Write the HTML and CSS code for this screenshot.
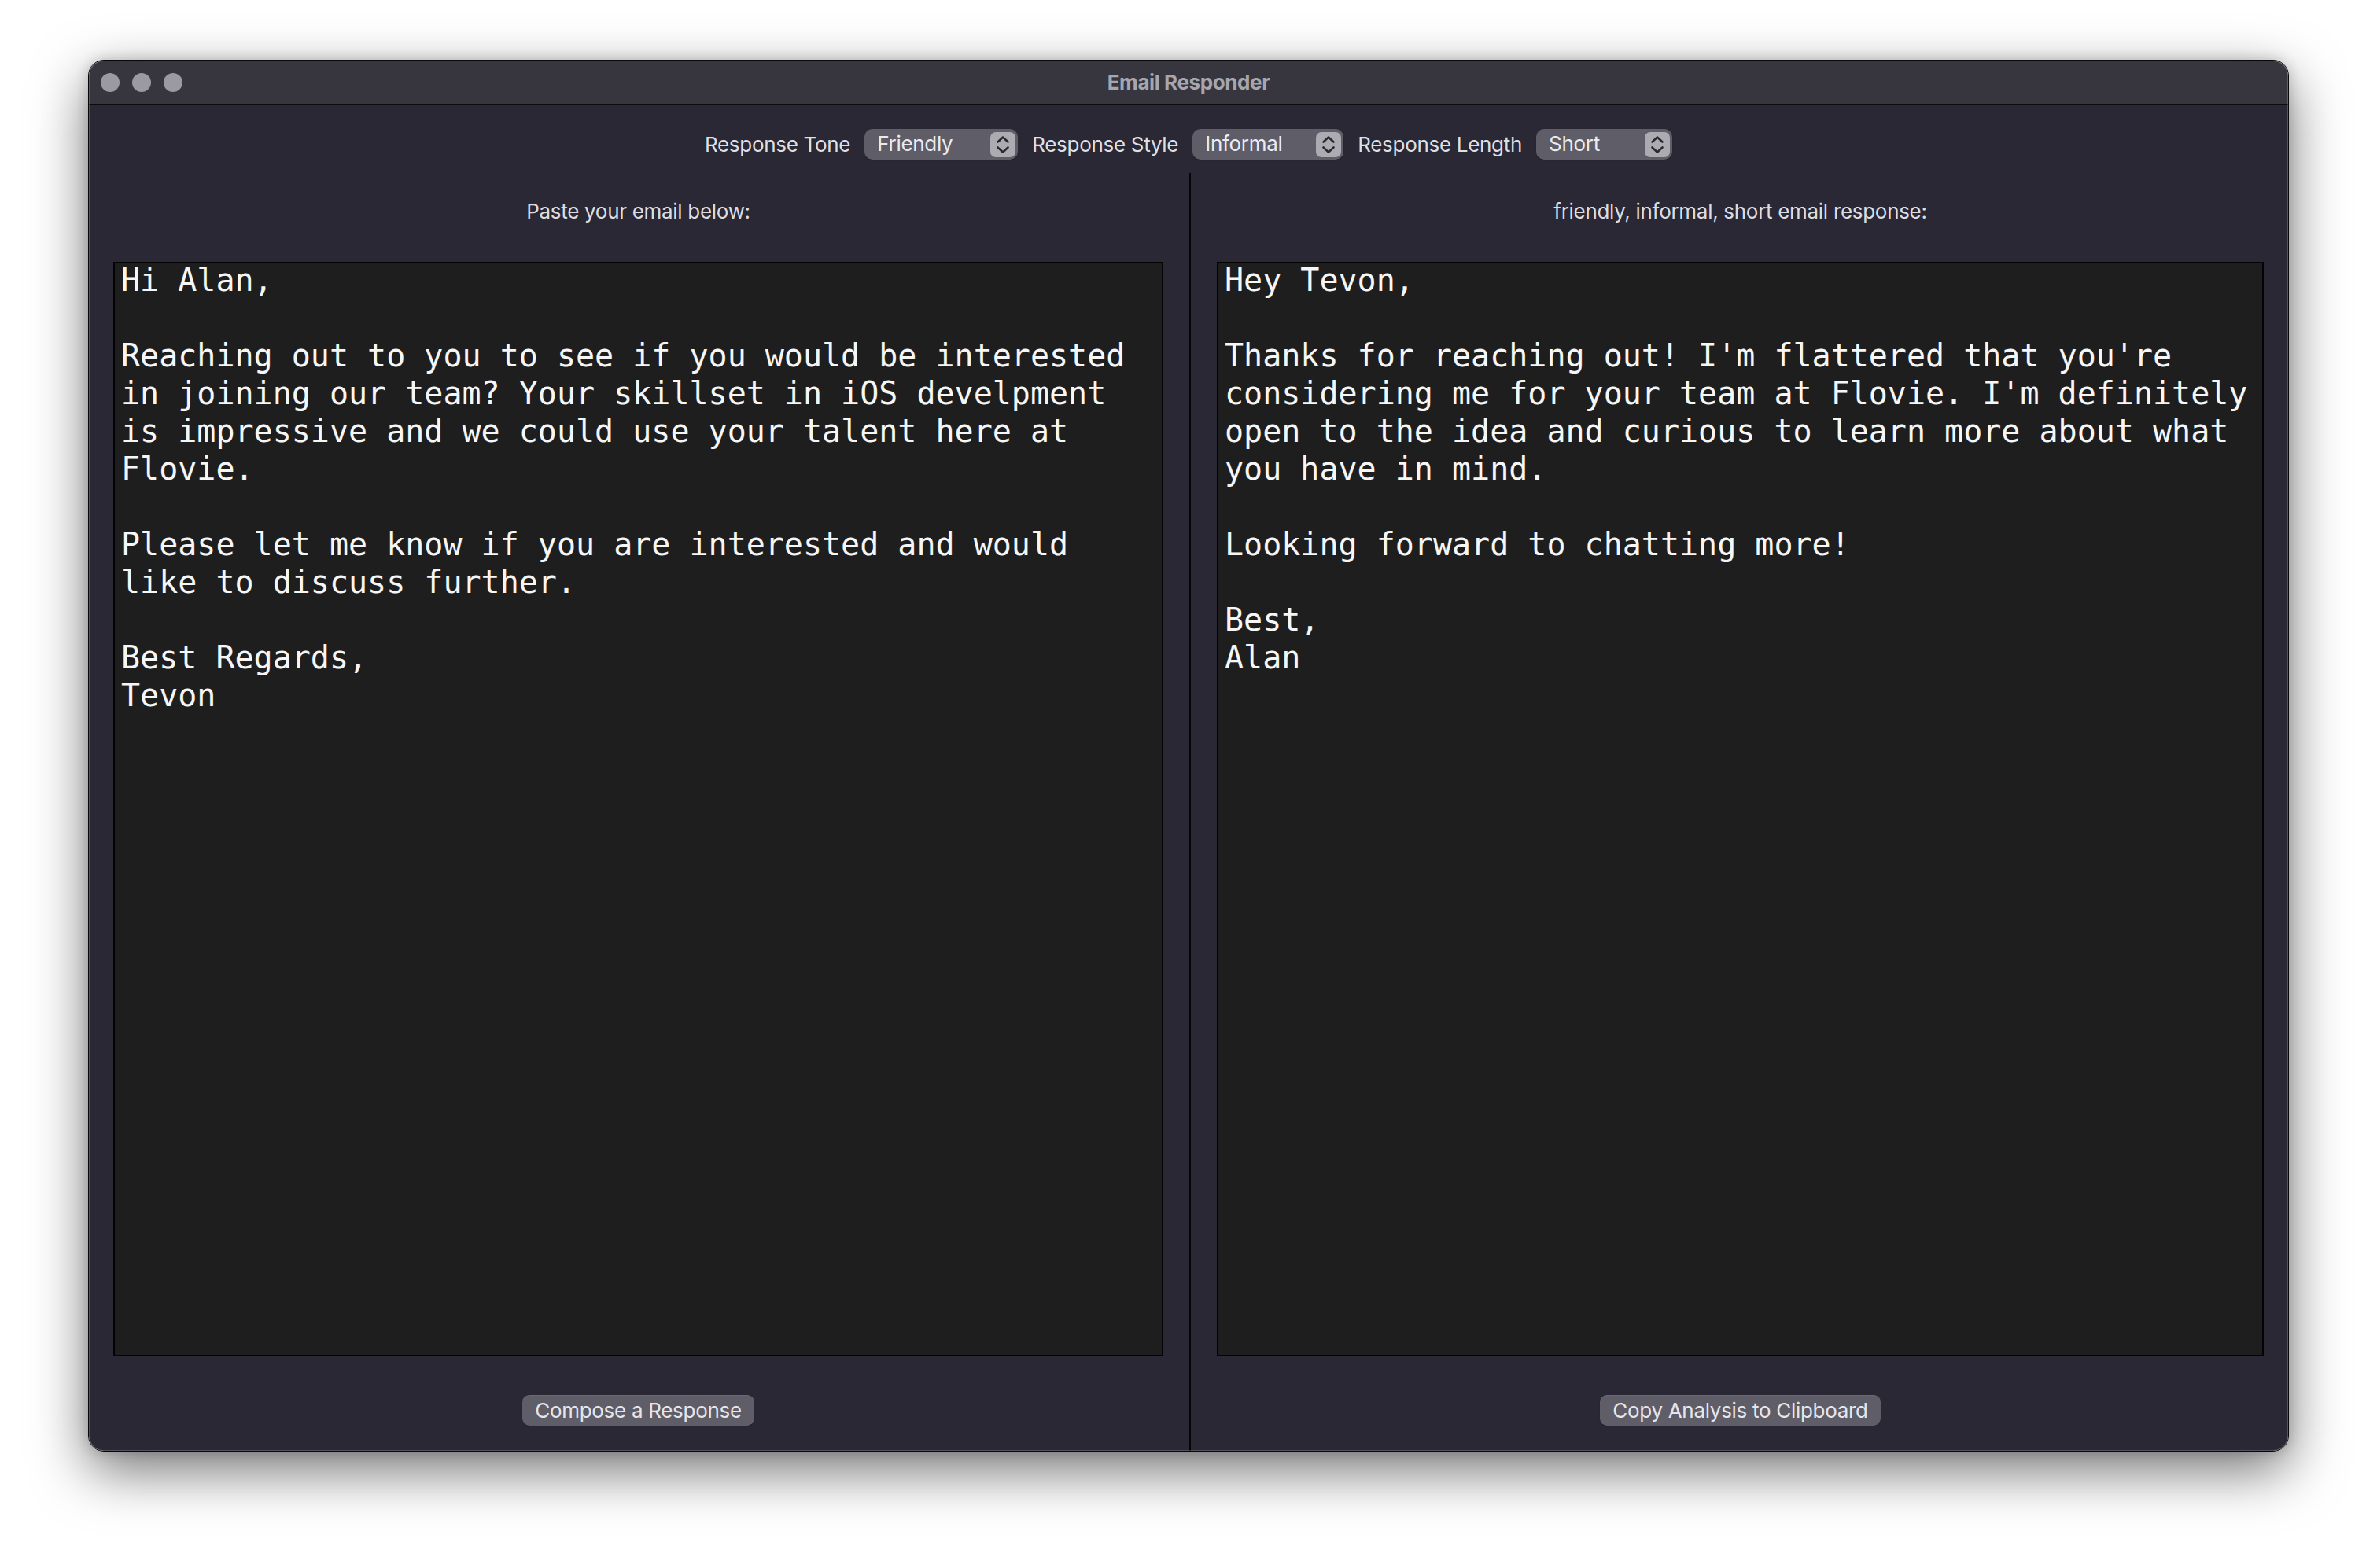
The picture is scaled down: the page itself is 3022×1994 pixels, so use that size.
FILE: index.html
```html
<!DOCTYPE html>
<html lang="en">
<head>
<meta charset="utf-8">
<title>Email Responder</title>
<link rel="stylesheet" href="styles.css">
</head>
<body>
<div class="desktop">
  <div class="window">
    <div class="titlebar">
      <div class="lights">
        <span class="light"></span>
        <span class="light"></span>
        <span class="light"></span>
      </div>
      <div class="title">Email Responder</div>
      <div class="titlebar-spacer"></div>
    </div>
    <div class="content">
      <div class="toolbar">
        <span class="label">Response Tone</span>
        <div class="popup popup-tone">
          <span class="popup-text">Friendly</span>
          <span class="stepper"><svg viewBox="0 0 32 32" width="32" height="32"><path d="M9.5 12.5 L16 6.5 L22.5 12.5" /><path d="M9.5 19.5 L16 25.5 L22.5 19.5" /></svg></span>
        </div>
        <span class="label">Response Style</span>
        <div class="popup popup-style">
          <span class="popup-text">Informal</span>
          <span class="stepper"><svg viewBox="0 0 32 32" width="32" height="32"><path d="M9.5 12.5 L16 6.5 L22.5 12.5" /><path d="M9.5 19.5 L16 25.5 L22.5 19.5" /></svg></span>
        </div>
        <span class="label">Response Length</span>
        <div class="popup popup-length">
          <span class="popup-text">Short</span>
          <span class="stepper"><svg viewBox="0 0 32 32" width="32" height="32"><path d="M9.5 12.5 L16 6.5 L22.5 12.5" /><path d="M9.5 19.5 L16 25.5 L22.5 19.5" /></svg></span>
        </div>
      </div>
      <div class="panes">
        <div class="pane pane-left">
          <div class="pane-header">Paste your email below:</div>
          <div class="editor"><div class="editor-text">Hi Alan,

Reaching out to you to see if you would be interested
in joining our team? Your skillset in iOS develpment
is impressive and we could use your talent here at
Flovie.

Please let me know if you are interested and would
like to discuss further.

Best Regards,
Tevon</div></div>
          <div class="pane-footer"><button class="btn">Compose a Response</button></div>
        </div>
        <div class="divider"></div>
        <div class="pane pane-right">
          <div class="pane-header">friendly, informal, short email response:</div>
          <div class="editor"><div class="editor-text">Hey Tevon,

Thanks for reaching out! I'm flattered that you're
considering me for your team at Flovie. I'm definitely
open to the idea and curious to learn more about what
you have in mind.

Looking forward to chatting more!

Best,
Alan</div></div>
          <div class="pane-footer"><button class="btn">Copy Analysis to Clipboard</button></div>
        </div>
      </div>
    </div>
  </div>
</div>
</body>
</html>
```

FILE: styles.css
```css
* {
  box-sizing: border-box;
}

html, body {
  margin: 0;
  padding: 0;
  background: #ffffff;
}

body {
  font-family: "Inter", "Noto Sans", "Liberation Sans", sans-serif;
  letter-spacing: -0.3px;
  width: 3022px;
  height: 1994px;
  overflow: hidden;
}

.desktop {
  padding: 76px 0 0 112px;
}

.window {
  position: relative;
  width: 2798px;
  height: 1770px;
  border: 1px solid #08080a;
  border-radius: 20px;
  overflow: hidden;
  display: flex;
  flex-direction: column;
  box-shadow: 0 24px 70px rgba(0, 0, 0, 0.55), 0 0 16px rgba(0, 0, 0, 0.18);
}

.window::after {
  content: "";
  position: absolute;
  inset: 0;
  border-radius: 19px;
  box-shadow: inset 0 0 0 1px rgba(255, 255, 255, 0.2);
  pointer-events: none;
}

.titlebar {
  height: 56px;
  flex: none;
  background: #37363f;
  border-bottom: 1px solid #0c0c0f;
  display: grid;
  grid-template-columns: 1fr auto 1fr;
  align-items: center;
}

.lights {
  display: flex;
  gap: 16px;
  padding-left: 15px;
  padding-top: 1px;
}

.light {
  width: 24px;
  height: 24px;
  border-radius: 50%;
  background: #9b9aa3;
}

.title {
  font-size: 26px;
  font-weight: 700;
  color: #a7a6ae;
  letter-spacing: -0.4px;
}

.content {
  flex: 1;
  background: #292834;
  display: flex;
  flex-direction: column;
}

.toolbar {
  height: 87px;
  flex: none;
  display: flex;
  justify-content: center;
  align-items: flex-start;
  padding-top: 31px;
  gap: 18px;
}

.label {
  font-size: 26px;
  line-height: 39px;
  color: #dfdfe3;
}

.popup {
  height: 39px;
  border-radius: 10px;
  background: #5e5d68;
  box-shadow: 0 1px 1px rgba(0, 0, 0, 0.35);
  display: flex;
  align-items: center;
  justify-content: space-between;
  padding: 0 3px 0 16px;
}

.popup-tone { width: 195px; }
.popup-style { width: 192px; }
.popup-length { width: 173px; }

.popup-text {
  font-size: 26px;
  color: #ebebef;
  line-height: 39px;
  padding-bottom: 2px;
}

.stepper {
  width: 32px;
  height: 32px;
  border-radius: 7px;
  background: #acabb2;
  display: flex;
}

.stepper svg {
  display: block;
}

.stepper path {
  fill: none;
  stroke: #2a2930;
  stroke-width: 2.6;
  stroke-linecap: round;
  stroke-linejoin: round;
}

.panes {
  flex: 1;
  display: flex;
}

.pane {
  display: flex;
  flex-direction: column;
  padding-top: 33px;
  padding-bottom: 32px;
}

.pane-left {
  width: 1399px;
  flex: none;
  padding-left: 31px;
  padding-right: 33px;
}

.pane-right {
  flex: 1;
  padding-left: 33px;
  padding-right: 31px;
}

.divider {
  width: 2px;
  flex: none;
  background: #050507;
}

.pane-header {
  font-size: 26px;
  line-height: 32px;
  color: #dddde1;
  text-align: center;
  margin-bottom: 48px;
}

.editor {
  flex: 1;
  background: #1e1e1e;
  border: 2px solid #030303;
  padding: 0 5px 0 8px;
  overflow: hidden;
}

.editor-text {
  margin-top: -3px;
  font-family: "DejaVu Sans Mono", "Liberation Mono", monospace;
  font-size: 40px;
  line-height: 48px;
  letter-spacing: 0;
  color: #f6f6f6;
  white-space: pre-wrap;
}

.pane-footer {
  margin-top: 49px;
  display: flex;
  justify-content: center;
}

.btn {
  height: 39px;
  padding: 0 16px;
  border: none;
  border-radius: 9px;
  background: #5e5d68;
  box-shadow: 0 1px 1px rgba(0, 0, 0, 0.35), inset 0 1px 0 rgba(255, 255, 255, 0.08);
  font-family: "Inter", "Noto Sans", "Liberation Sans", sans-serif;
  font-size: 26px;
  line-height: 39px;
  letter-spacing: -0.3px;
  color: #e6e6ea;
}
```
